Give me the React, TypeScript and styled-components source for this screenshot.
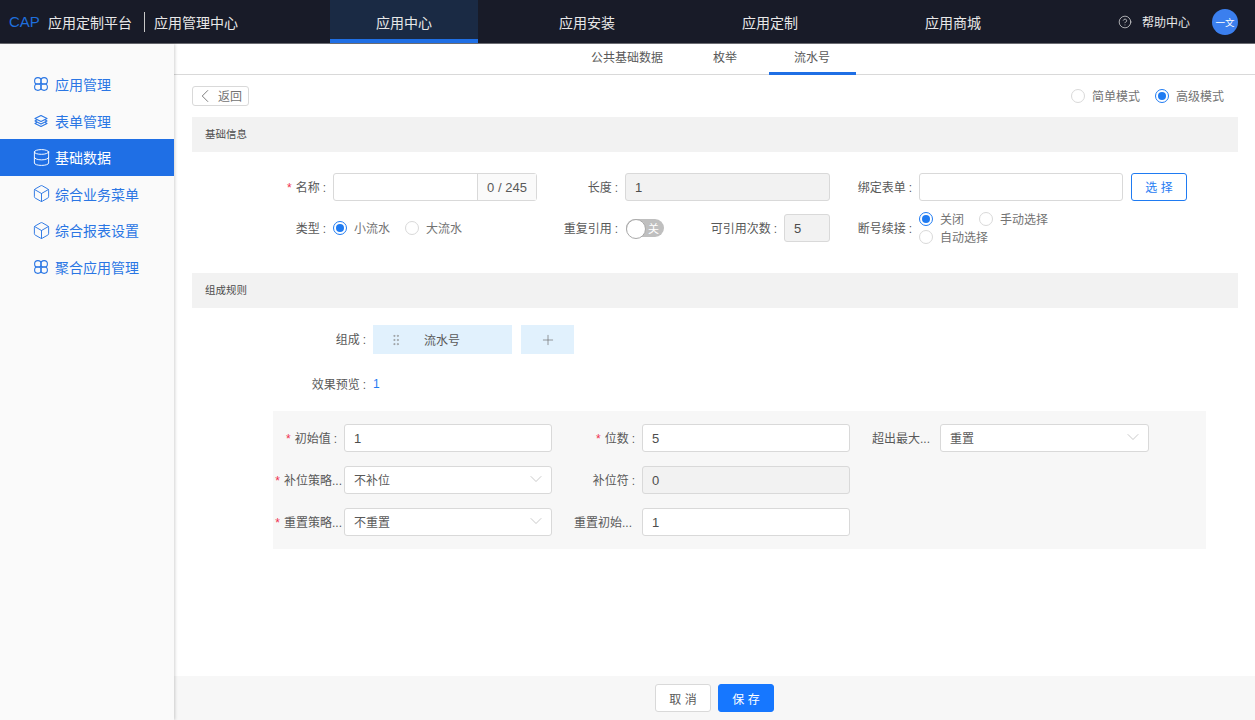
import React from "react";
import styled, { createGlobalStyle } from "styled-components";
import { Box, ChevronDown, ChevronLeft, CircleHelp, Database, GripVertical, Plus } from "lucide-react";

const GlobalStyle = createGlobalStyle`
  html, body { margin: 0; padding: 0; height: 720px; overflow: hidden; background: #fff; }
  body { font-family: "Liberation Sans", "Noto Sans CJK SC", sans-serif; font-size: 12px; color: #595959; }
  * { box-sizing: border-box; }
`;

const Page = styled.div`
  height: 720px;
  display: flex;
  flex-direction: column;
`;

const Header = styled.header`
  height: 44px;
  flex: none;
  display: flex;
  background: #181b28;
  border-bottom: 1px solid #6b6c72;
  color: #e8e8e8;
`;

const Brand = styled.div`
  width: 330px;
  flex: none;
  display: flex;
  align-items: center;
  padding-left: 9px;
  font-size: 14px;
`;

const Cap = styled.span`
  font-size: 15px;
  color: #1f6fde;
  width: 39px;
`;

const BrandDivider = styled.span`
  width: 1px;
  height: 20px;
  background: #c8c8c8;
  margin: 0 9px 0 12px;
`;

const Nav = styled.nav`
  display: flex;
  gap: 35px;
`;

const NavItem = styled.div<{ $active?: boolean }>`
  width: 148px;
  display: flex;
  align-items: center;
  justify-content: center;
  font-size: 14px;
  background: ${(p) => (p.$active ? "#1a2a44" : "transparent")};
  border-bottom: 4px solid ${(p) => (p.$active ? "#1f6fe5" : "transparent")};
  padding-top: 4px;
`;

const HeaderRight = styled.div`
  margin-left: auto;
  padding-right: 17px;
  display: flex;
  align-items: center;
  font-size: 12px;
`;

const Help = styled.span`
  display: flex;
  align-items: center;
  gap: 10px;
  margin-right: 22px;
`;

const Avatar = styled.span`
  width: 26px;
  height: 26px;
  border-radius: 50%;
  background: #3b7fee;
  color: #fff;
  font-size: 9.5px;
  display: flex;
  align-items: center;
  justify-content: center;
`;

const Body = styled.div`
  flex: 1;
  min-height: 0;
  display: flex;
`;

const Sidebar = styled.aside`
  width: 174px;
  flex: none;
  padding-top: 22px;
  background: #fafafa;
  box-shadow: 1px 0 3px rgba(0, 0, 0, 0.18);
  position: relative;
`;

const SideItem = styled.div<{ $active?: boolean }>`
  height: 36.5px;
  display: flex;
  align-items: center;
  gap: 6px;
  padding-left: 33px;
  font-size: 14px;
  color: ${(p) => (p.$active ? "#fff" : "#2a76e4")};
  background: ${(p) => (p.$active ? "#1f6fe5" : "transparent")};
  .lucide {
    margin: 0 -1.5px;
    flex: none;
  }
`;

const Main = styled.main`
  flex: 1;
  min-width: 0;
  display: flex;
  flex-direction: column;
`;

const SubTabs = styled.div`
  height: 31px;
  flex: none;
  display: flex;
  padding-left: 392px;
  border-bottom: 1px solid #d9d9d9;
`;

const SubTab = styled.div<{ $active?: boolean }>`
  height: 31px;
  line-height: 28px;
  padding: 0 25px;
  color: #595959;
  margin-left: ${(p) => (p.$active ? "7px" : "0")};
  width: ${(p) => (p.$active ? "87px" : "auto")};
  border-bottom: 3px solid ${(p) => (p.$active ? "#1f6fe5" : "transparent")};
`;

const Content = styled.div`
  flex: 1;
  min-height: 0;
  padding: 11px 17px 0 18px;
`;

const Toolbar = styled.div`
  height: 20px;
  display: flex;
  align-items: center;
  justify-content: space-between;
  padding-right: 14px;
`;

const BackButton = styled.div`
  width: 57px;
  height: 20px;
  display: flex;
  align-items: center;
  gap: 2px;
  padding: 0 0 1px 1px;
  background: #fff;
  border: 1px solid #d9d9d9;
  border-radius: 3px;
  color: #737373;
`;

const RadioGroup = styled.div<{ $width?: number }>`
  display: flex;
  flex-wrap: wrap;
  align-items: center;
  column-gap: 15px;
  ${(p) => (p.$width ? `width: ${p.$width}px;` : "")}
`;

const RadioLabel = styled.span`
  display: inline-flex;
  align-items: center;
  gap: 7px;
  height: 18px;
  color: #737373;
`;

const RadioText = styled.span`
  margin-bottom: 2px;
`;

const RadioDot = styled.span<{ $checked?: boolean }>`
  width: 14px;
  height: 14px;
  border-radius: 50%;
  background: #fff;
  border: 1px solid ${(p) => (p.$checked ? "#1f7bf2" : "#d9d9d9")};
  display: flex;
  align-items: center;
  justify-content: center;
  &::after {
    content: "";
    width: 8px;
    height: 8px;
    border-radius: 50%;
    background: ${(p) => (p.$checked ? "#1f7bf2" : "transparent")};
  }
`;

const SectionHead = styled.div<{ $top: number }>`
  height: 35px;
  margin-top: ${(p) => p.$top}px;
  padding: 0 0 2px 13px;
  display: flex;
  align-items: center;
  background: #f2f2f2;
  font-size: 10.5px;
  color: #4d4d4d;
`;

const FormGrid = styled.div`
  margin: 21px 0 0 61px;
  display: grid;
  grid-template-columns: 292px 294px auto;
  grid-auto-rows: 28px;
  row-gap: 13px;
`;

const Field = styled.div`
  height: 28px;
  display: flex;
  align-items: center;
`;

const Label = styled.label<{ $width?: number }>`
  width: ${(p) => p.$width ?? 80}px;
  flex: none;
  padding: 0 7px 2px 0;
  text-align: right;
  white-space: nowrap;
  color: #595959;
  &::after {
    content: ":";
    margin-left: 3px;
  }
`;

const TruncatedLabel = styled(Label)<{ $pad: number }>`
  padding-right: ${(p) => p.$pad}px;
  &::after {
    content: "";
    margin-left: 0;
  }
`;

const Required = styled.span`
  color: #f0304f;
  margin-right: 4px;
`;

const InputBox = styled.div<{ $width: number; $disabled?: boolean }>`
  width: ${(p) => p.$width}px;
  height: 28px;
  flex: none;
  display: flex;
  align-items: center;
  justify-content: space-between;
  padding: 0 5px 2px 9px;
  font-size: 12px;
  color: #595959;
  background: ${(p) => (p.$disabled ? "#f2f2f2" : "#fff")};
  border: 1px solid #d9d9d9;
  border-radius: 3px;
`;

const Digits = styled.span`
  font-size: 13px;
  color: #4d4d4d;
  margin-top: 2px;
`;

const GroupInput = styled.div`
  width: 204px;
  height: 28px;
  display: flex;
  border: 1px solid #d9d9d9;
  border-radius: 3px;
`;

const GroupAddon = styled.span`
  margin-left: auto;
  width: 59px;
  display: flex;
  align-items: center;
  justify-content: center;
  background: #fafafa;
  border-left: 1px solid #d9d9d9;
  font-size: 13px;
`;

const OutlineButton = styled.div`
  width: 56px;
  height: 28px;
  margin-left: 8px;
  padding-bottom: 1px;
  display: flex;
  align-items: center;
  justify-content: center;
  border: 1px solid #1f7bf2;
  border-radius: 3px;
  color: #1f7bf2;
`;

const Switch = styled.div`
  width: 38px;
  height: 18px;
  flex: none;
  margin-left: 1px;
  border-radius: 9px;
  background: #bfbfbf;
  color: #fff;
  font-size: 11px;
  display: flex;
  align-items: center;
  justify-content: flex-end;
  padding-right: 5px;
  position: relative;
  &::before {
    content: "";
    position: absolute;
    left: 0;
    top: 0;
    width: 18px;
    height: 18px;
    border-radius: 50%;
    background: #fff;
    border: 1px solid #a8a8a8;
  }
`;

const CompositionRow = styled.div`
  margin: 17px 0 0 101px;
  height: 29px;
  display: flex;
  align-items: center;
`;

const Chip = styled.div`
  width: 139px;
  height: 29px;
  display: flex;
  align-items: center;
  padding-left: 16px;
  gap: 21px;
  background: #e1f1fd;
  color: #595959;
`;

const AddChip = styled.div`
  width: 53px;
  height: 29px;
  margin-left: 9px;
  display: flex;
  align-items: center;
  justify-content: center;
  background: #e1f1fd;
  color: #6b6b6b;
`;

const PreviewRow = styled.div`
  margin: 20px 0 0 101px;
  height: 20px;
  display: flex;
  align-items: center;
`;

const PreviewValue = styled.span`
  color: #1f7bf2;
`;

const RulePanel = styled.div`
  margin: 17px 32px 0 81px;
  padding: 13px 0;
  display: grid;
  grid-template-columns: 298px 298px auto;
  row-gap: 14px;
  background: #f7f7f7;
`;

const Footer = styled.footer`
  height: 44px;
  flex: none;
  display: flex;
  align-items: center;
  justify-content: center;
  gap: 7px;
  background: #f7f7f7;
`;

const FooterButton = styled.div<{ $primary?: boolean }>`
  width: 56px;
  height: 28px;
  display: flex;
  align-items: center;
  justify-content: center;
  border-radius: 3px;
  background: ${(p) => (p.$primary ? "#1677ff" : "#fff")};
  border: 1px solid ${(p) => (p.$primary ? "#1677ff" : "#d9d9d9")};
  color: ${(p) => (p.$primary ? "#fff" : "#595959")};
`;

const PetalIcon = () => (
  <svg width="16" height="16" viewBox="0 0 16 16" fill="none" stroke="currentColor" strokeWidth="1.1">
    <circle cx="4.9" cy="4.9" r="3.3" />
    <circle cx="11.1" cy="4.9" r="3.3" />
    <circle cx="4.9" cy="11.1" r="3.3" />
    <circle cx="11.1" cy="11.1" r="3.3" />
  </svg>
);

const StackIcon = () => (
  <svg width="16" height="16" viewBox="0 0 16 16" fill="none" stroke="currentColor" strokeWidth="1.1" strokeLinejoin="round">
    <path d="M8 2.5 14 5.5 8 8.5 2 5.5Z" />
    <path d="M4 6.7 2 8 8 11 14 8 12 6.7" />
    <path d="M4 9.2 2 10.5 8 13.5 14 10.5 12 9.2" />
  </svg>
);

const sideItems = [
  { label: "应用管理", icon: <PetalIcon /> },
  { label: "表单管理", icon: <StackIcon /> },
  { label: "基础数据", icon: <Database size={19} strokeWidth={1.2} />, active: true },
  { label: "综合业务菜单", icon: <Box size={19} strokeWidth={1.2} /> },
  { label: "综合报表设置", icon: <Box size={19} strokeWidth={1.2} /> },
  { label: "聚合应用管理", icon: <PetalIcon /> },
];

const Radio = ({ label, checked }: { label: string; checked?: boolean }) => (
  <RadioLabel>
    <RadioDot $checked={checked} />
    <RadioText>{label}</RadioText>
  </RadioLabel>
);

const Select = ({ value, width = 208 }: { value: string; width?: number }) => (
  <InputBox $width={width}>
    {value}
    <ChevronDown size={20} strokeWidth={1} color="#bfbfbf" />
  </InputBox>
);

export default function App() {
  return (
    <Page>
      <GlobalStyle />
      <Header>
        <Brand>
          <Cap>CAP</Cap>
          应用定制平台
          <BrandDivider />
          应用管理中心
        </Brand>
        <Nav>
          <NavItem $active>应用中心</NavItem>
          <NavItem>应用安装</NavItem>
          <NavItem>应用定制</NavItem>
          <NavItem>应用商城</NavItem>
        </Nav>
        <HeaderRight>
          <Help>
            <CircleHelp size={14} strokeWidth={1.2} />
            帮助中心
          </Help>
          <Avatar>一文</Avatar>
        </HeaderRight>
      </Header>
      <Body>
        <Sidebar>
          {sideItems.map((item) => (
            <SideItem key={item.label} $active={item.active}>
              {item.icon}
              {item.label}
            </SideItem>
          ))}
        </Sidebar>
        <Main>
          <SubTabs>
            <SubTab>公共基础数据</SubTab>
            <SubTab>枚举</SubTab>
            <SubTab $active>流水号</SubTab>
          </SubTabs>
          <Content>
            <Toolbar>
              <BackButton>
                <ChevronLeft size={22} strokeWidth={1} />
                返回
              </BackButton>
              <RadioGroup>
                <Radio label="简单模式" />
                <Radio label="高级模式" checked />
              </RadioGroup>
            </Toolbar>

            <SectionHead $top={11}>基础信息</SectionHead>
            <FormGrid>
              <Field>
                <Label><Required>*</Required>名称</Label>
                <GroupInput>
                  <GroupAddon>0 / 245</GroupAddon>
                </GroupInput>
              </Field>
              <Field>
                <Label>长度</Label>
                <InputBox $width={205} $disabled><Digits>1</Digits></InputBox>
              </Field>
              <Field>
                <Label>绑定表单</Label>
                <InputBox $width={204} />
                <OutlineButton>选 择</OutlineButton>
              </Field>
              <Field>
                <Label>类型</Label>
                <RadioGroup>
                  <Radio label="小流水" checked />
                  <Radio label="大流水" />
                </RadioGroup>
              </Field>
              <Field>
                <Label>重复引用</Label>
                <Switch>关</Switch>
                <Label $width={120}>可引用次数</Label>
                <InputBox $width={46} $disabled><Digits>5</Digits></InputBox>
              </Field>
              <Field>
                <Label>断号续接</Label>
                <RadioGroup $width={140}>
                  <Radio label="关闭" checked />
                  <Radio label="手动选择" />
                  <Radio label="自动选择" />
                </RadioGroup>
              </Field>
            </FormGrid>

            <SectionHead $top={31}>组成规则</SectionHead>
            <CompositionRow>
              <Label>组成</Label>
              <Chip>
                <GripVertical size={14} strokeWidth={1.2} color="#8c8c8c" />
                流水号
              </Chip>
              <AddChip>
                <Plus size={16} strokeWidth={1} />
              </AddChip>
            </CompositionRow>
            <PreviewRow>
              <Label>效果预览</Label>
              <PreviewValue>1</PreviewValue>
            </PreviewRow>
            <RulePanel>
              <Field>
                <Label $width={71}><Required>*</Required>初始值</Label>
                <InputBox $width={208}><Digits>1</Digits></InputBox>
              </Field>
              <Field>
                <Label $width={71}><Required>*</Required>位数</Label>
                <InputBox $width={208}><Digits>5</Digits></InputBox>
              </Field>
              <Field>
                <TruncatedLabel $width={71} $pad={10}>超出最大...</TruncatedLabel>
                <Select value="重置" width={209} />
              </Field>
              <Field>
                <TruncatedLabel $width={71} $pad={2}><Required>*</Required>补位策略...</TruncatedLabel>
                <Select value="不补位" />
              </Field>
              <Field>
                <Label $width={71}>补位符</Label>
                <InputBox $width={208} $disabled><Digits>0</Digits></InputBox>
              </Field>
              <div />
              <Field>
                <TruncatedLabel $width={71} $pad={2}><Required>*</Required>重置策略...</TruncatedLabel>
                <Select value="不重置" />
              </Field>
              <Field>
                <TruncatedLabel $width={71} $pad={10}>重置初始...</TruncatedLabel>
                <InputBox $width={208}><Digits>1</Digits></InputBox>
              </Field>
            </RulePanel>
          </Content>
          <Footer>
            <FooterButton>取 消</FooterButton>
            <FooterButton $primary>保 存</FooterButton>
          </Footer>
        </Main>
      </Body>
    </Page>
  );
}
